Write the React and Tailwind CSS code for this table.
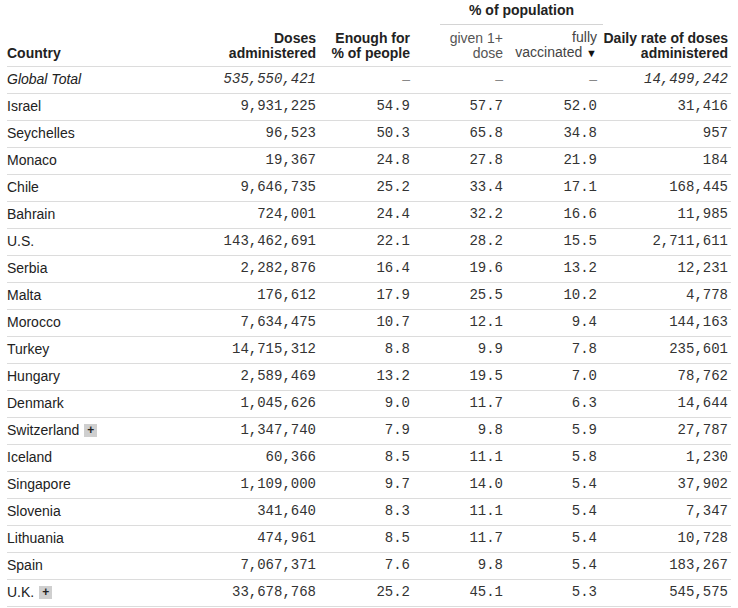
const rows = [
  ['Israel', '9,931,225', '54.9', '57.7', '52.0', '31,416'],
  ['Seychelles', '96,523', '50.3', '65.8', '34.8', '957'],
  ['Monaco', '19,367', '24.8', '27.8', '21.9', '184'],
  ['Chile', '9,646,735', '25.2', '33.4', '17.1', '168,445'],
  ['Bahrain', '724,001', '24.4', '32.2', '16.6', '11,985'],
  ['U.S.', '143,462,691', '22.1', '28.2', '15.5', '2,711,611'],
  ['Serbia', '2,282,876', '16.4', '19.6', '13.2', '12,231'],
  ['Malta', '176,612', '17.9', '25.5', '10.2', '4,778'],
  ['Morocco', '7,634,475', '10.7', '12.1', '9.4', '144,163'],
  ['Turkey', '14,715,312', '8.8', '9.9', '7.8', '235,601'],
  ['Hungary', '2,589,469', '13.2', '19.5', '7.0', '78,762'],
  ['Denmark', '1,045,626', '9.0', '11.7', '6.3', '14,644'],
  ['Switzerland', '1,347,740', '7.9', '9.8', '5.9', '27,787', true],
  ['Iceland', '60,366', '8.5', '11.1', '5.8', '1,230'],
  ['Singapore', '1,109,000', '9.7', '14.0', '5.4', '37,902'],
  ['Slovenia', '341,640', '8.3', '11.1', '5.4', '7,347'],
  ['Lithuania', '474,961', '8.5', '11.7', '5.4', '10,728'],
  ['Spain', '7,067,371', '7.6', '9.8', '5.4', '183,267'],
  ['U.K.', '33,678,768', '25.2', '45.1', '5.3', '545,575', true],
]

const cols = 'grid grid-cols-[213px_99px_94px_93px_94px_131px]'
const sans = "font-['Liberation_Sans',Arial,sans-serif]"
const mono = "font-['Liberation_Mono','Courier_New',monospace]"

function Plus() {
  return (
    <span className="ml-[5px] inline-flex h-[13px] w-[13px] items-center justify-center bg-[#cfcfcf] text-[12px] font-bold leading-none text-[#222]">
      +
    </span>
  )
}

function Dash() {
  return <div className={`pr-[3px] text-right text-[#888] ${sans}`}>–</div>
}

export default function App() {
  return (
    <div className={`w-[731px] bg-white pl-[7px] ${sans}`}>
      <div className={`${cols} grid-rows-[25px_41px] border-b border-[#dcdcdc] text-[14px] leading-[15px] text-[#222]`}>
        <div className="row-span-2 flex items-end pb-[5px] font-bold">Country</div>
        <div className="row-span-2 flex flex-col items-end justify-end pb-[5px] pr-[3px] text-right font-bold">
          <span>Doses</span>
          <span>administered</span>
        </div>
        <div className="row-span-2 flex flex-col items-end justify-end pb-[5px] pr-[3px] text-right font-bold">
          <span>Enough for</span>
          <span>% of people</span>
        </div>
        <div className="col-span-2 ml-[27px] mr-[-3px] flex items-start justify-center border-b border-[#d4d4d4] pt-[3px] font-bold">
          % of population
        </div>
        <div className="row-span-2 flex flex-col items-end justify-end pb-[5px] pr-[3px] text-right font-bold">
          <span>Daily rate of doses</span>
          <span>administered</span>
        </div>
        <div className="flex flex-col items-end justify-end pb-[5px] pr-[3px] text-[#555]">
          <span>given 1+</span>
          <span>dose</span>
        </div>
        <div className="flex flex-col items-end justify-end pb-[5px] pr-[3px] text-[#444]">
          <span>fully</span>
          <span>
            vaccinated <span className="text-[11px] text-[#111]">▼</span>
          </span>
        </div>
      </div>

      <div className={`${cols} h-[27px] items-center border-b border-[#dcdcdc] pb-[2px] text-[14px] italic`}>
        <div className="text-[#222]">Global Total</div>
        <div className={`pr-[3px] text-right text-[#333] ${mono}`}>535,550,421</div>
        <Dash />
        <Dash />
        <Dash />
        <div className={`pr-[3px] text-right text-[#333] ${mono}`}>14,499,242</div>
      </div>

      {rows.map((r) => (
        <div key={r[0]} className={`${cols} h-[27px] items-center border-b border-[#dcdcdc] pb-[2px] text-[14px]`}>
          <div className="flex items-center text-[#222]">
            {r[0]}
            {r[6] && <Plus />}
          </div>
          {r.slice(1, 6).map((v, i) => (
            <div key={i} className={`pr-[3px] text-right text-[#333] ${mono}`}>
              {v}
            </div>
          ))}
        </div>
      ))}
    </div>
  )
}
